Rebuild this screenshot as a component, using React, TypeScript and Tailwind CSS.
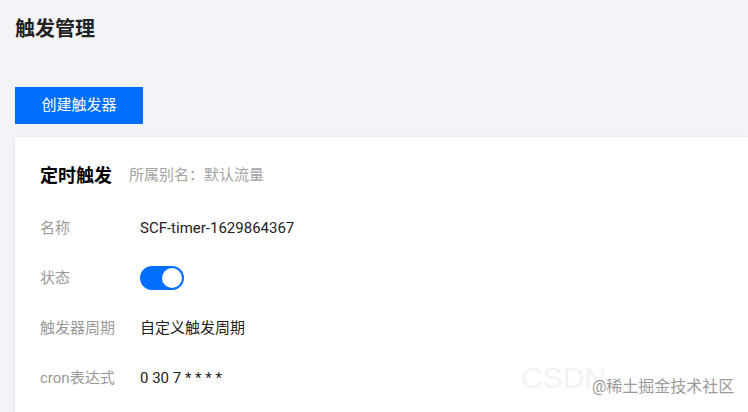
import React from "react";

const font = { fontFamily: '"Roboto", "Noto Sans CJK SC", sans-serif' };

function Row({ label, children }: { label: string; children: React.ReactNode }) {
  return (
    <div className="flex h-[50px] items-center">
      <div className="w-[100px] text-[15px] text-[#999]">{label}</div>
      <div className="text-[15px] text-[#222]">{children}</div>
    </div>
  );
}

export default function App() {
  return (
    <div className="relative h-[412px] w-[748px] overflow-hidden bg-[#f3f4f7]" style={font}>
      <div className="px-[15px] pt-[15px]">
        <h1 className="text-[20px] font-semibold leading-[28px] text-[#222]">触发管理</h1>
        <button className="mt-[44px] h-[37px] w-[128px] bg-[#006eff] text-[15px] text-white">
          创建触发器
        </button>
      </div>
      <div className="ml-[15px] mt-[13px] h-[300px] bg-white pl-[25px] pt-[26px] shadow-[0_0_4px_rgba(0,0,0,0.08)]">
        <div className="flex h-[24px] items-center">
          <span className="text-[18px] font-bold text-black">定时触发</span>
          <span className="ml-[17px] text-[15px] text-[#a3a3a3]">所属别名：默认流量</span>
        </div>
        <div className="mt-[16px]">
          <Row label="名称">SCF-timer-1629864367</Row>
          <Row label="状态">
            <div className="relative h-[24px] w-[44px] rounded-full bg-[#006eff]">
              <div className="absolute right-[2px] top-[2px] h-[20px] w-[20px] rounded-full bg-white" />
            </div>
          </Row>
          <Row label="触发器周期">自定义触发周期</Row>
          <Row label="cron表达式">0 30 7 * * * *</Row>
        </div>
      </div>
      <div
        className="pointer-events-none absolute left-[521px] top-[360px] text-[30px] leading-[36px] text-[#f2f2f2]"
        style={{ fontFamily: '"Liberation Sans", sans-serif' }}
      >
        CSDN
      </div>
      <div className="pointer-events-none absolute left-[592px] top-[376px] text-[16px] leading-[22px] text-[#9a9a9a]">
        @稀土掘金技术社区
      </div>
    </div>
  );
}
